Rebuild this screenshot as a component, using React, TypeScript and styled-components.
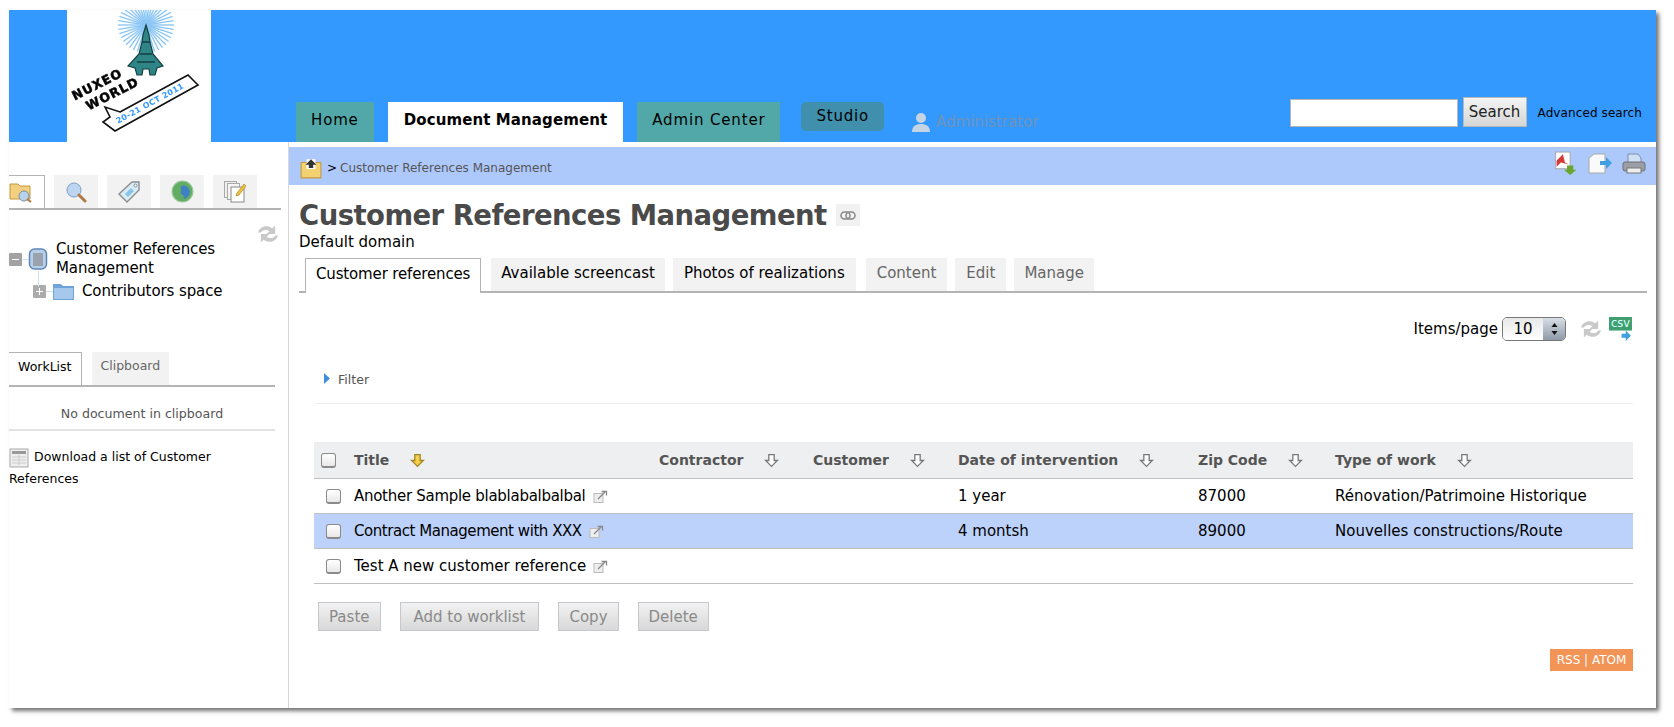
import { ReactNode } from "react";
import styled, { createGlobalStyle } from "styled-components";

const Global = createGlobalStyle`
  html, body { margin: 0; padding: 0; background: #fff; }
  body { font-family: "DejaVu Sans", Verdana, sans-serif; color: #000; overflow: hidden; }
`;

const Page = styled.div`
  width: 1674px;
  height: 727px;
  padding: 10px 0 0 9px;
  box-sizing: border-box;
`;

const Win = styled.div`
  width: 1647px;
  height: 698px;
  background: #fff;
  box-shadow: 3px 3px 4px rgba(70, 70, 70, 0.75);
  display: flex;
  flex-direction: column;
  overflow: hidden;
`;

const Header = styled.header`
  height: 132px;
  flex: none;
  background: #3399ff;
  display: flex;
  align-items: flex-end;
  padding-left: 58px;
`;

const LogoBox = styled.div`
  width: 144px;
  height: 132px;
  background: #fff;
  flex: none;
  svg { filter: blur(0.4px); display: block; }
`;

const Nav = styled.nav`
  display: flex;
  align-items: flex-end;
  margin-left: 85px;
  height: 40px;
`;

const NavTab = styled.a<{ $active?: boolean }>`
  height: 40px;
  box-sizing: border-box;
  padding: 9px ${(p) => (p.$active ? 16 : 15)}px 0;
  margin-right: 14px;
  font-size: 15px;
  letter-spacing: ${(p) => (p.$active ? "0.1px" : "0.85px")};
  background: ${(p) => (p.$active ? "#fff" : "#52a8a8")};
  font-weight: ${(p) => (p.$active ? 700 : 400)};
`;

const Studio = styled.a`
  align-self: flex-start;
  height: 29px;
  box-sizing: border-box;
  margin-left: 7px;
  padding: 5px 15px 0;
  border-radius: 5px;
  background: #3f8fad;
  font-size: 15px;
  letter-spacing: 0.8px;
`;

const User = styled.div`
  display: flex;
  align-items: center;
  gap: 5px;
  margin-left: 27px;
  align-self: flex-start;
  height: 40px;
  font-size: 15px;
  color: #6f93b8;
`;

const SearchArea = styled.form`
  margin-left: auto;
  height: 45px;
  display: flex;
  align-items: flex-start;
  padding-right: 14px;
`;

const SearchInput = styled.div`
  width: 168px;
  height: 28px;
  margin-top: 2px;
  box-sizing: border-box;
  background: #fff;
  border: 1px solid #b5b5b5;
`;

const SearchButton = styled.button`
  width: 64px;
  height: 30px;
  margin-left: 5px;
  padding: 0;
  border: 1px solid #b8b8b8;
  background: linear-gradient(#f4f4f4, #d6d6d6);
  font: 15px "DejaVu Sans", sans-serif;
  color: #222;
`;

const AdvLink = styled.a`
  margin: 8px 0 0 11px;
  font-size: 12px;
  line-height: 16px;
  letter-spacing: 0.1px;
`;

const Body = styled.div`
  flex: 1;
  display: flex;
  min-height: 0;
`;

const Side = styled.aside`
  width: 279px;
  flex: none;
  border-right: 1px solid #d8d8d8;
  box-sizing: content-box;
`;

const TabLine = styled.div<{ $width: number; $top: number }>`
  margin-top: ${(p) => p.$top}px;
  width: ${(p) => p.$width}px;
  display: flex;
  border-bottom: 2px solid #b4b4b4;
`;

const IconTab = styled.div<{ $active?: boolean; $w?: number }>`
  width: ${(p) => p.$w ?? 44}px;
  height: 33px;
  margin-right: 9px;
  display: flex;
  align-items: center;
  justify-content: ${(p) => (p.$active ? "flex-start" : "center")};
  box-sizing: border-box;
  background: ${(p) => (p.$active ? "#fff" : "#f2f2f2")};
  ${(p) => p.$active && "border-top: 1px solid #b4b4b4; border-right: 1px solid #b4b4b4;"}
`;

const SideRefresh = styled.div`
  display: flex;
  justify-content: flex-end;
  padding: 14px 10px 0 0;
  height: 16px;
`;

const Tree = styled.div`
  font-size: 15px;
  line-height: 19px;
  letter-spacing: -0.1px;
`;

const TreeRow = styled.div<{ $indent: number }>`
  display: flex;
  align-items: center;
  padding-left: ${(p) => p.$indent}px;
  & + & { margin-top: 4px; }
`;

const TreeIcon = styled.span`
  position: relative;
  display: inline-flex;
  &::after {
    content: "";
    position: absolute;
    left: 50%;
    top: 100%;
    width: 1px;
    height: 16px;
    background: #cfe0f5;
  }
`;

const TreeLabel = styled.span`
  margin-left: 8px;
`;

const TextTab = styled.div<{ $active?: boolean }>`
  height: 33px;
  box-sizing: border-box;
  padding: 0 9px;
  margin-right: 10px;
  line-height: 28px;
  font-size: 12.5px;
  background: ${(p) => (p.$active ? "#fff" : "#f2f2f2")};
  color: ${(p) => (p.$active ? "#000" : "#666")};
  ${(p) => p.$active && "border-top: 1px solid #b4b4b4; border-right: 1px solid #b4b4b4;"}
`;

const EmptyNote = styled.div`
  width: 266px;
  height: 44px;
  box-sizing: border-box;
  border-bottom: 2px solid #e2e2e2;
  text-align: center;
  line-height: 54px;
  font-size: 12.6px;
  color: #555;
`;

const DownloadLink = styled.div`
  margin-top: 15px;
  font-size: 12.5px;
  line-height: 22px;
  width: 250px;
  svg { vertical-align: middle; margin-right: 5px; }
`;

const Main = styled.main`
  flex: 1;
  min-width: 0;
`;

const Crumb = styled.div`
  margin-top: 5px;
  height: 38px;
  background: #adc8fb;
  display: flex;
  align-items: center;
  padding: 3px 10px 0 11px;
  box-sizing: border-box;
  font-size: 12px;
  color: #555;
`;

const CrumbSep = styled.span`
  color: #000;
  margin: 0 3px 0 5px;
`;

const CrumbTools = styled.div`
  margin-left: auto;
  display: flex;
  gap: 10px;
  align-items: center;
  padding-bottom: 8px;
`;

const Content = styled.div`
  padding: 12px 9px 0 10px;
`;

const Title = styled.h1`
  margin: 0;
  font-size: 27.5px;
  line-height: 36px;
  letter-spacing: -0.55px;
  font-weight: 700;
  color: #4a4a4a;
  display: flex;
  align-items: center;
  gap: 9px;
`;

const LinkBadge = styled.span`
  width: 24px;
  height: 22px;
  background: #f1f1f1;
  display: inline-flex;
  align-items: center;
  justify-content: center;
`;

const Subtitle = styled.div`
  font-size: 15px;
  line-height: 18px;
`;

const Tabs = styled.div`
  margin-top: 7px;
  height: 33px;
  display: flex;
  gap: 8px;
  border-bottom: 2px solid #b4b4b4;
  padding-left: 6px;
`;

const PageTab = styled.a<{ $active?: boolean; $muted?: boolean; $pad?: number; $after?: number }>`
  height: 33px;
  box-sizing: border-box;
  padding: 0 ${(p) => p.$pad ?? 10}px;
  margin-right: ${(p) => p.$after ?? 0}px;
  line-height: 30px;
  font-size: 15px;
  background: ${(p) => (p.$active ? "#fff" : "#f2f2f2")};
  color: ${(p) => (p.$muted ? "#666" : "#000")};
  ${(p) => p.$active && "border: 1px solid #b4b4b4; border-bottom: 0; height: 35px; letter-spacing: -0.15px;"}
`;

const Pager = styled.div`
  display: flex;
  justify-content: flex-end;
  align-items: center;
  gap: 7px;
  height: 26px;
  margin-top: 23px;
  padding-right: 14px;
  font-size: 15px;
`;

const SelectBox = styled.div`
  width: 64px;
  height: 24px;
  box-sizing: border-box;
  border: 1px solid #777;
  border-radius: 5px;
  display: flex;
  overflow: hidden;
  margin: 0 8px 0 -3px;
  font-size: 15px;
`;

const SelectValue = styled.div`
  flex: 1;
  text-align: center;
  line-height: 23px;
  background: linear-gradient(#e8e8e8, #fff);
`;

const SelectArrows = styled.div`
  width: 22px;
  background: linear-gradient(#d7dee6, #8e9aa8);
  display: flex;
  align-items: center;
  justify-content: center;
`;

const FilterBar = styled.div`
  margin: 12px 14px 0 15px;
  height: 50px;
  border-bottom: 1px solid #efefef;
  display: flex;
  align-items: flex-start;
  padding: 19px 0 0 10px;
  box-sizing: border-box;
  gap: 8px;
  font-size: 12.6px;
  color: #555;
  line-height: 14px;
`;

const Table = styled.div`
  margin: 38px 14px 0 15px;
`;

const Row = styled.div<{ $head?: boolean; $hi?: boolean }>`
  display: grid;
  grid-template-columns: 40px 305px 154px 145px 240px 137px 1fr;
  align-items: center;
  height: ${(p) => (p.$head ? 37 : 35)}px;
  box-sizing: border-box;
  border-bottom: 1px solid #c0c0c0;
  font-size: ${(p) => (p.$head ? 14 : 15)}px;
  background: ${(p) => (p.$head ? "#eeeff0" : p.$hi ? "#bdd2fb" : "#fff")};
  ${(p) => p.$head && "font-weight: 700; color: #555;"}
`;

const CheckCell = styled.div<{ $head?: boolean }>`
  padding-left: ${(p) => (p.$head ? 7 : 12)}px;
  display: flex;
`;

const Box = styled.span`
  width: 13px;
  height: 12px;
  border: 1px solid #8a8a8a;
  border-bottom-width: 2px;
  border-radius: 3px;
  background: linear-gradient(#fff, #e8e8e8);
`;

const HeadCell = styled.div`
  display: flex;
  align-items: center;
  gap: 21px;
`;

const TitleCell = styled.div<{ $spacing: number }>`
  display: flex;
  align-items: center;
  gap: 7px;
  letter-spacing: ${(p) => p.$spacing}px;
`;

const Actions = styled.div`
  margin: 18px 0 0 19px;
  display: flex;
  gap: 19px;
`;

const ActionButton = styled.button<{ $pad?: number }>`
  height: 29px;
  padding: 0 ${(p) => p.$pad ?? 10}px;
  border: 1px solid #c4c8cc;
  background: linear-gradient(#f2f2f2, #d8d8d8);
  color: #8a8a8a;
  font: 15px "DejaVu Sans", sans-serif;
`;

const FeedRow = styled.div`
  display: flex;
  justify-content: flex-end;
  margin: 18px 14px 0 0;
`;

const Feed = styled.a`
  width: 83px;
  height: 22px;
  background: #f29456;
  color: #fff;
  font-size: 12px;
  line-height: 22px;
  text-align: center;
`;

const Refresh = () => (
  <svg width="20" height="20" viewBox="3 3 14 14" fill="none">
    <path d="M3 9c1-4 6-6 10-3l2-2v6h-6l2-2c-2-1.500-5-1-6 1H3z" fill="#c9c9c9" />
    <path d="M17 11c-1 4-6 6-10 3l-2 2v-6h6l-2 2c2 1.500 5 1 6-1h2z" fill="#c9c9c9" />
  </svg>
);

const SortArrow = ({ gold }: { gold?: boolean }) => (
  <svg width="15" height="15" viewBox="0 0 14 14">
    <path
      d="M4.500 1.500h5v5.500h3L7 12.500 1.500 7h3z"
      fill={gold ? "#f4cf4e" : "#fff"}
      stroke={gold ? "#a08423" : "#777"}
      strokeWidth="1.200"
    />
  </svg>
);

const ExternalIcon = () => (
  <svg width="15" height="13" viewBox="0 0 15 13" fill="none">
    <rect x="1" y="3.500" width="9" height="9" fill="#eee" stroke="#bbb" />
    <path d="M5 9l7-7M8.500 1.500h5v4" stroke="#888" strokeWidth="1.300" />
  </svg>
);

const Logo = () => (
  <svg width="144" height="132" viewBox="0 0 144 132">
    {Array.from({ length: 40 }).map((_, i) => {
      const a = (i * Math.PI) / 20;
      return (
        <line
          key={i}
          x1={79}
          y1={15}
          x2={79 + Math.cos(a) * 28}
          y2={15 + Math.sin(a) * 28}
          stroke="#8cc6f5"
          strokeWidth="1.400"
        />
      );
    })}
    <path
      d="M79 15l3 10 1 7 3 12 10 12-6 2-2 7h-5l-1-6h-6l-1 6h-5l-2-7-7-2 11-12 3-12 1-7z"
      fill="#2f8585"
      stroke="#143f42"
      strokeWidth="1.200"
    />
    <path d="M75 32h8M73 44h12M70 52h18" stroke="#143f42" strokeWidth="1.400" />
    <g transform="rotate(-27 6 87)">
      <text x="6" y="91" fontFamily="DejaVu Sans" fontWeight="700" fontSize="12.500" letterSpacing="1" stroke="#111" strokeWidth="0.600">NUXEO</text>
    </g>
    <g transform="rotate(-27 20 97)">
      <text x="20" y="101" fontFamily="DejaVu Sans" fontWeight="700" fontSize="12.500" letterSpacing="1" stroke="#111" strokeWidth="0.600">WORLD</text>
    </g>
    <path d="M53 102l68-37 10 10-83 46-12-9 7-5-5-10z" fill="#fff" stroke="#111" strokeWidth="1.600" />
    <g transform="rotate(-28.500 50 112)">
      <text x="50" y="114" fontFamily="DejaVu Sans" fontWeight="700" fontSize="8" letterSpacing="0.300" fill="#3399ff">20-21 OCT 2011</text>
    </g>
  </svg>
);

const FolderSearch = () => (
  <svg width="24" height="24" viewBox="0 0 24 24">
    <path d="M1 4h8l2 2h10v13H1z" fill="#f3cf80" stroke="#c4963d" />
    <circle cx="15" cy="16" r="5" fill="#b8d2ec" stroke="#7a8ea8" />
    <path d="M18 19l4 3" stroke="#b5763a" strokeWidth="2" />
  </svg>
);

const Magnifier = () => (
  <svg width="22" height="22" viewBox="0 0 22 22">
    <circle cx="9" cy="9" r="7" fill="#bcd6f2" stroke="#7f9fc4" />
    <path d="M14 14l6 6" stroke="#b07a45" strokeWidth="3" strokeLinecap="round" />
  </svg>
);

const TagIcon = () => (
  <svg width="24" height="24" viewBox="0 0 24 24">
    <path d="M15 2h7v8L10 22l-8-8z" fill="#d8ecf8" stroke="#8d8d8d" strokeWidth="1.400" />
    <path d="M8 14l6-6 3 3-6 6z" fill="#8cc4e8" />
    <circle cx="18.500" cy="5.500" r="1.500" fill="#fff" stroke="#888" />
  </svg>
);

const Globe = () => (
  <svg width="23" height="23" viewBox="0 0 22 22">
    <circle cx="11" cy="11" r="10" fill="#62ad62" stroke="#9ac89c" />
    <path d="M9 6c4-2 8 0 9 5 0 4-3 7-6 7 1-3-1-4-3-5 1-2 1-4 0-7z" fill="#3f7fc4" />
  </svg>
);

const PagesPen = () => (
  <svg width="24" height="24" viewBox="0 0 24 24">
    <rect x="1.500" y="1.500" width="12" height="16" fill="#eee" stroke="#aaa" />
    <rect x="4.500" y="3.500" width="12" height="16" fill="#f4f4f4" stroke="#aaa" />
    <rect x="8" y="7" width="13" height="15" fill="#fff" stroke="#888" />
    <path d="M14 13l7-9 2 2-7 9-3 1z" fill="#f0c040" stroke="#b08a20" strokeWidth="0.700" />
  </svg>
);

const TreeMinus = () => (
  <svg width="19" height="13" viewBox="0 0 19 13">
    <path d="M13 6.500h6" stroke="#cfe0f5" />
    <rect width="13" height="13" rx="1" fill="#a2a2a2" />
    <path d="M3 6.500h7" stroke="#fff" />
  </svg>
);

const TreePlus = () => (
  <svg width="20" height="13" viewBox="0 0 20 13">
    <path d="M13 6.500h7" stroke="#cfe0f5" />
    <rect width="13" height="13" rx="1" fill="#ababab" />
    <path d="M3 6.500h7M6.500 3v7" stroke="#fff" />
  </svg>
);

const DomainIcon = () => (
  <svg width="20" height="24" viewBox="0 0 20 24">
    <rect x="1.500" y="2" width="17" height="20" rx="5" fill="#b8cfe8" stroke="#5f86b8" strokeWidth="1.500" />
    <rect x="5" y="6" width="10" height="13" fill="#9aa3ad" />
  </svg>
);

const FolderBlue = () => (
  <svg width="21" height="17" viewBox="0 0 21 17">
    <path d="M0 1h8l2 2h11v14H0z" fill="#6fa3da" />
    <path d="M1 5h19v11H1z" fill="#a6c8ec" />
  </svg>
);

const Sheet = () => (
  <svg width="20" height="20" viewBox="0 0 20 20">
    <rect x="1" y="1" width="18" height="18" fill="#eee" stroke="#aaa" />
    <rect x="3" y="3" width="14" height="3" fill="#999" />
    <path d="M3 9h14M3 12h14M3 15h14M10 7v10" stroke="#ccc" />
  </svg>
);

const UpFolder = () => (
  <svg width="22" height="22" viewBox="0 0 20 20">
    <path d="M1 5h18v14H1z" fill="#f3d070" stroke="#c79a40" />
    <path d="M6 2h8v9H6z" fill="#fff" />
    <path d="M10 2l5 5h-3v3H8V7H5z" fill="#333" />
  </svg>
);

const PdfDown = () => (
  <svg width="24" height="25" viewBox="0 0 22 24">
    <rect x="1" y="1" width="14" height="16" fill="#fff" stroke="#aaa" />
    <path d="M2 9l6-6 2 8 4 2-8-2-4 4z" fill="#d43a3a" />
    <path d="M12 14h6v4h3l-6 5-6-5h3z" fill="#6aa52f" />
  </svg>
);

const PageArrow = () => (
  <svg width="24" height="24" viewBox="0 0 24 24">
    <path d="M1 6l5-4h11v19H1z" fill="#fafafa" stroke="#a8a8a8" />
    <path d="M12 9h6V5l6 6-6 6v-4h-6z" fill="#3f9fe0" />
  </svg>
);

const Printer = () => (
  <svg width="24" height="24" viewBox="0 0 24 24">
    <path d="M6 2h10l3 4v6H6z" fill="#cfe0f5" stroke="#7c8ea4" />
    <rect x="1" y="10" width="22" height="9" rx="2" fill="#9b9fa5" stroke="#6c7077" />
    <rect x="5" y="16" width="14" height="5" fill="#eee" stroke="#777" />
  </svg>
);

const UserIcon = () => (
  <svg width="20" height="20" viewBox="0 0 20 20">
    <circle cx="10" cy="6" r="5" fill="#c4d4e4" />
    <path d="M1 20c0-6 4-8 9-8s9 2 9 8z" fill="#c4d4e4" />
  </svg>
);

const CsvIcon = () => (
  <svg width="25" height="25" viewBox="0 0 24 24">
    <rect x="1" y="0" width="22" height="13" fill="#3f9f6f" />
    <text x="12" y="10" textAnchor="middle" fontSize="11" fontFamily="DejaVu Sans" fill="#dff">csv</text>
    <path d="M13 16h4v-3l5 5-5 5v-3h-4z" fill="#3f9fe0" />
  </svg>
);

const Arrows = () => (
  <svg width="9" height="16" viewBox="0 0 9 16">
    <path d="M4.500 2l3 4h-6zM4.500 14l3-4h-6z" fill="#111" />
  </svg>
);

const Head = ({ label, gold }: { label: string; gold?: boolean }) => (
  <HeadCell>
    {label}
    <SortArrow gold={gold} />
  </HeadCell>
);

const rows: { title: string; spacing: number; date: string; zip: string; type: string; hi?: boolean }[] = [
  { title: "Another Sample blablabalbalbal", spacing: -0.28, date: "1 year", zip: "87000", type: "Rénovation/Patrimoine Historique" },
  { title: "Contract Management with XXX", spacing: -0.45, date: "4 montsh", zip: "89000", type: "Nouvelles constructions/Route", hi: true },
  { title: "Test A new customer reference", spacing: 0, date: "", zip: "", type: "" },
];

const sideTabs: { icon: ReactNode; active?: boolean; w?: number }[] = [
  { icon: <FolderSearch />, active: true, w: 36 },
  { icon: <Magnifier /> },
  { icon: <TagIcon /> },
  { icon: <Globe /> },
  { icon: <PagesPen /> },
];

export default function App() {
  return (
    <Page>
      <Global />
      <Win>
        <Header>
          <LogoBox>
            <Logo />
          </LogoBox>
          <Nav>
            <NavTab>Home</NavTab>
            <NavTab $active>Document Management</NavTab>
            <NavTab>Admin Center</NavTab>
            <Studio>Studio</Studio>
            <User>
              <UserIcon />
              Administrator
            </User>
          </Nav>
          <SearchArea>
            <SearchInput />
            <SearchButton type="button">Search</SearchButton>
            <AdvLink>Advanced search</AdvLink>
          </SearchArea>
        </Header>
        <Body>
          <Side>
            <TabLine $width={272} $top={33}>
              {sideTabs.map((t, i) => (
                <IconTab key={i} $active={t.active} $w={t.w}>
                  {t.icon}
                </IconTab>
              ))}
            </TabLine>
            <SideRefresh>
              <Refresh />
            </SideRefresh>
            <Tree>
              <TreeRow $indent={0}>
                <TreeMinus />
                <TreeIcon>
                  <DomainIcon />
                </TreeIcon>
                <TreeLabel>
                  Customer References
                  <br />
                  Management
                </TreeLabel>
              </TreeRow>
              <TreeRow $indent={24}>
                <TreePlus />
                <FolderBlue />
                <TreeLabel>Contributors space</TreeLabel>
              </TreeRow>
            </Tree>
            <TabLine $width={266} $top={51}>
              <TextTab $active>WorkList</TextTab>
              <TextTab>Clipboard</TextTab>
            </TabLine>
            <EmptyNote>No document in clipboard</EmptyNote>
            <DownloadLink>
              <Sheet />
              Download a list of Customer References
            </DownloadLink>
          </Side>
          <Main>
            <Crumb>
              <UpFolder />
              <CrumbSep>&gt;</CrumbSep>
              Customer References Management
              <CrumbTools>
                <PdfDown />
                <PageArrow />
                <Printer />
              </CrumbTools>
            </Crumb>
            <Content>
              <Title>
                Customer References Management
                <LinkBadge>
                  <svg width="16" height="9" viewBox="0 0 16 9" fill="none">
                    <rect x="1" y="1" width="9" height="7" rx="3.500" stroke="#888" strokeWidth="1.500" />
                    <rect x="6" y="1" width="9" height="7" rx="3.500" stroke="#888" strokeWidth="1.500" />
                  </svg>
                </LinkBadge>
              </Title>
              <Subtitle>Default domain</Subtitle>
              <Tabs>
                <PageTab $active $after={2}>Customer references</PageTab>
                <PageTab>Available screencast</PageTab>
                <PageTab $pad={11} $after={2}>Photos of realizations</PageTab>
                <PageTab $muted $pad={11}>Content</PageTab>
                <PageTab $muted $pad={11}>Edit</PageTab>
                <PageTab $muted>Manage</PageTab>
              </Tabs>
              <Pager>
                Items/page
                <SelectBox>
                  <SelectValue>10</SelectValue>
                  <SelectArrows>
                    <Arrows />
                  </SelectArrows>
                </SelectBox>
                <Refresh />
                <CsvIcon />
              </Pager>
              <FilterBar>
                <svg width="6" height="11" viewBox="0 0 6 11">
                  <path d="M0 0l6 5.500L0 11z" fill="#3f8fe0" />
                </svg>
                Filter
              </FilterBar>
              <Table>
                <Row $head>
                  <CheckCell $head>
                    <Box />
                  </CheckCell>
                  <Head label="Title" gold />
                  <Head label="Contractor" />
                  <Head label="Customer" />
                  <Head label="Date of intervention" />
                  <Head label="Zip Code" />
                  <Head label="Type of work" />
                </Row>
                {rows.map((r) => (
                  <Row key={r.title} $hi={r.hi}>
                    <CheckCell>
                      <Box />
                    </CheckCell>
                    <TitleCell $spacing={r.spacing}>
                      {r.title}
                      <ExternalIcon />
                    </TitleCell>
                    <div />
                    <div />
                    <div>{r.date}</div>
                    <div>{r.zip}</div>
                    <div>{r.type}</div>
                  </Row>
                ))}
              </Table>
              <Actions>
                <ActionButton type="button">Paste</ActionButton>
                <ActionButton type="button" $pad={13}>Add to worklist</ActionButton>
                <ActionButton type="button">Copy</ActionButton>
                <ActionButton type="button">Delete</ActionButton>
              </Actions>
              <FeedRow>
                <Feed>RSS | ATOM</Feed>
              </FeedRow>
            </Content>
          </Main>
        </Body>
      </Win>
    </Page>
  );
}
